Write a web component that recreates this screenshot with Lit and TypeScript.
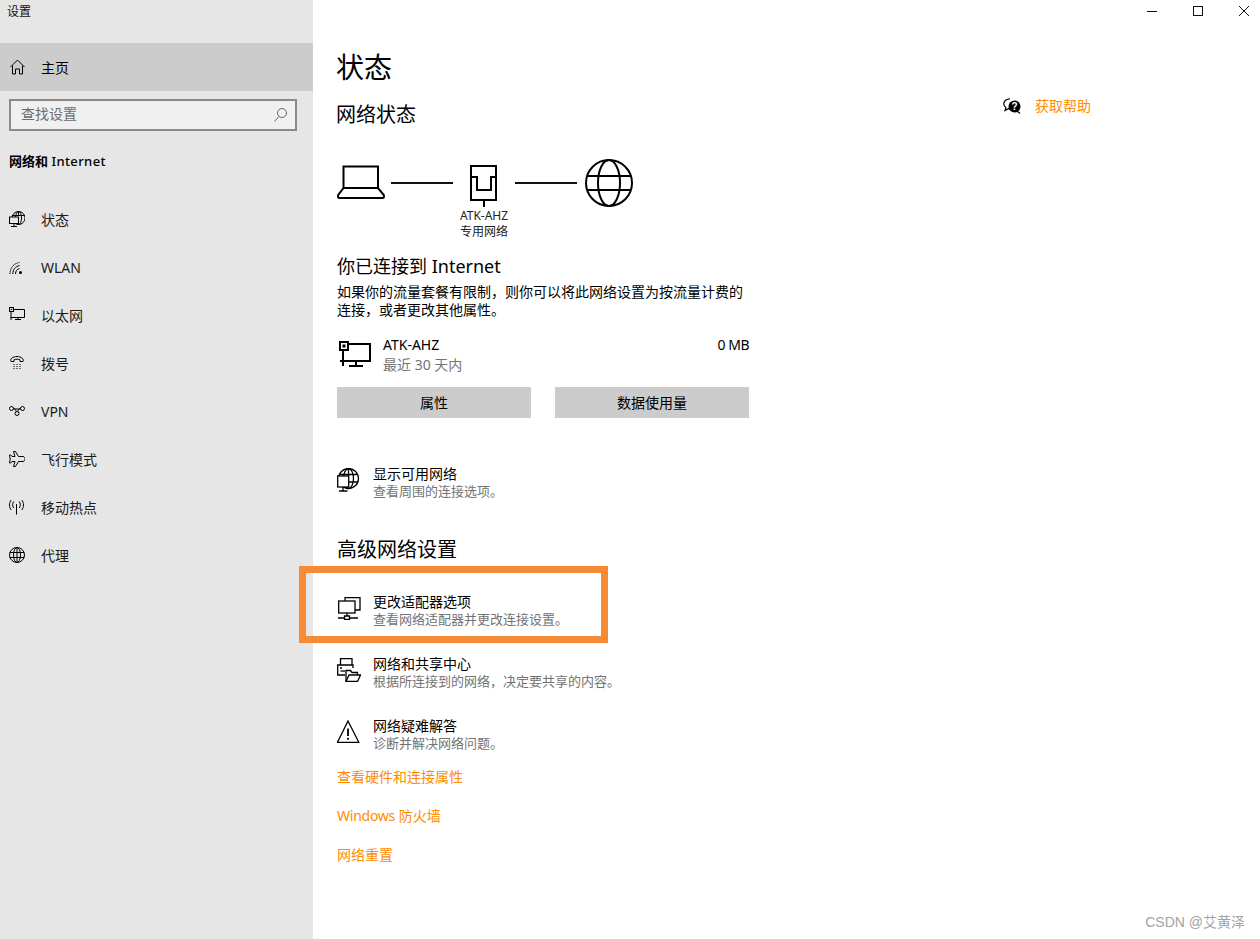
import { LitElement, html, css, svg } from "lit";
import { customElement } from "lit/decorators.js";

const navIcons = {
  status: svg`<circle cx="9.500" cy="7" r="6.500"/><ellipse cx="9.500" cy="7" rx="3" ry="6.500"/><path d="M3 4.500H16M9.500 .5V5"/><rect x=".5" y="6" width="9" height="6.500" fill="#e6e6e6"/><path d="M5 12.500V15M2 15.500H8"/>`,
  wlan: svg`<path d="M1 15C1 9 4.500 4.500 10.500 3.500" stroke-dasharray="1.500 .7"/><path d="M3.800 15C3.800 10.500 6.500 7.500 10.500 6.500"/><path d="M6.500 15C6.500 12 8 10.200 10.500 9.500"/><circle cx="11.500" cy="13.500" r="1.500" fill="#000" stroke="none"/>`,
  ethernet: svg`<path d="M4.500 2.500H15.500V10.500H1.500"/><rect x=".5" y=".5" width="4" height="4"/><path d="M2 4.500V13M6 12.500H12M9 10.500V12.500"/><rect x="1.800" y="1.800" width="1.400" height="1.200" fill="#000" stroke="none"/>`,
  dial: svg`<path d="M2 6.500C.5 4 4 1.500 8 1.500S15.500 4 14 6.500H11V4.800C9 4 7 4 5 4.800V6.500Z"/><path d="M4.500 9.500h1M7.500 9.500h1M10.500 9.500h1M4.500 11.500h1M7.500 11.500h1M10.500 11.500h1M4.500 13.500h1M7.500 13.500h1M10.500 13.500h1"/>`,
  vpn: svg`<circle cx="2.500" cy="5.500" r="2"/><circle cx="13.500" cy="5.500" r="2"/><circle cx="8" cy="10.500" r="2"/><path d="M4.300 5C6 5.500 7 7 7 8.700M11.700 5C10 5.500 9 7 9 8.700M4.500 6C6 6 10 6 11.500 6"/>`,
  plane: svg`<path d="M4.500 .5H6.500L9.500 5.500H14C15.500 5.500 16 7.200 16 8S15.500 10.500 14 10.500H9.500L6.500 15.500H4.500L6 10.500H3L1.800 12H.5L1.200 8L.5 4H1.800L3 5.500H6Z"/>`,
  hotspot: svg`<path d="M7.500 5V15.500"/><path d="M4.700 2.500C3.300 4.500 3.300 7 4.700 9M10.300 2.500C11.700 4.500 11.700 7 10.300 9M2.200 1C-.1 4 -.1 8 2.200 11M12.800 1C15.100 4 15.100 8 12.800 11"/>`,
  globe: svg`<circle cx="8" cy="8" r="7.500"/><ellipse cx="8" cy="8" rx="3.500" ry="7.500"/><path d="M.8 5.500H15.200M.8 10.500H15.200M8 .5V15.500"/>`,
};

const nav = [
  ["status", "状态"],
  ["wlan", "WLAN"],
  ["ethernet", "以太网"],
  ["dial", "拨号"],
  ["vpn", "VPN"],
  ["plane", "飞行模式"],
  ["hotspot", "移动热点"],
  ["globe", "代理"],
] as const;

const bigIcon = (c: unknown) =>
  html`<svg class="row-icon" viewBox="0 0 24 24" width="24" height="24" stroke-width="1.300">${c}</svg>`;

const showIcon = svg`<circle cx="11.500" cy="10.500" r="10"/><ellipse cx="11.500" cy="10.500" rx="5" ry="10"/><path d="M2.500 6.500H20.500M12 14H21M11.500 .5V8"/><rect x=".7" y="8" width="11" height="11" fill="#fff"/><path d="M6 19V23M2 23H10.500"/>`;
const adapterIcon = svg`<path d="M8 5V1.700H23V14H18"/><rect x="1.700" y="5" width="16.300" height="12" fill="#fff"/><path d="M10 17V20M1 22H7.500M12.500 22H21M7.500 20H12.500V23.500H7.500Z"/>`;
const shareIcon = svg`<path d="M3.500 7V.7H15V7"/><path d="M8 17H.7V7H16V10"/><path d="M3.500 13H8"/><path d="M3 10H5"/><path d="M9 23.500V12.500H13.500L15 14.500H20.500V17"/><path d="M9 23.500L12 17H23.500L20.500 23.500Z" fill="#fff"/>`;
const warnIcon = svg`<path d="M11 1L21.800 22.300H.5Z"/><path d="M11 8.500V16" stroke-width="1.800"/><circle cx="11" cy="18.800" r="1.100" fill="#000" stroke="none"/>`;

const settings = [
  [adapterIcon, "更改适配器选项", "查看网络适配器并更改连接设置。"],
  [shareIcon, "网络和共享中心", "根据所连接到的网络，决定要共享的内容。"],
  [warnIcon, "网络疑难解答", "诊断并解决网络问题。"],
] as const;

@customElement("app-root")
export class AppRoot extends LitElement {
  static styles = css`
    :host {
      display: block;
      position: relative;
      width: 1260px;
      height: 939px;
      overflow: hidden;
      background: #fff;
      color: #000;
      font-family: "Noto Sans", "Noto Sans CJK SC", sans-serif;
      font-size: 14px;
    }
    .root { display: flex; height: 100%; }
    svg { display: block; fill: none; stroke: #000; flex: none; }
    p { margin: 0; }

    .sidebar { width: 313px; flex: none; background: #e6e6e6; }
    .app-title { height: 43px; padding-left: 7px; box-sizing: border-box; font-size: 12px; line-height: 24px; color: #111; }
    .home, .nav-item { display: flex; align-items: center; height: 48px; }
    .home { background: #ccc; padding-left: 10px; gap: 16px; }
    .search {
      display: flex; align-items: center; justify-content: space-between;
      margin: 8px 0 0 9px; width: 288px; height: 32px; box-sizing: border-box;
      border: 2px solid #8a8a8a; background: #f0f0f0;
      padding: 0 8px 0 10px; color: #6b6b6b;
    }
    .search span { padding-bottom: 4px; }
    .search svg { stroke: #666; }
    .section { margin: 20px 0 24px 9px; font-size: 13px; font-weight: 700; line-height: 20px; }
    .section span { font-weight: 500; letter-spacing: .4px; }
    .nav-item { padding-left: 9px; gap: 16px; color: #1a1a1a; }

    .main { flex: 1; min-width: 0; display: flex; flex-direction: column; }
    .controls { display: flex; justify-content: flex-end; gap: 36px; height: 47px; padding: 6px 11px 0 0; box-sizing: border-box; }
    .controls svg { stroke: #111; }
    .body { display: flex; padding-left: 24px; }
    .content { width: 412px; flex: none; }
    .aside { margin: 49px 0 0 254px; display: flex; align-items: center; gap: 14px; height: 20px; color: #ff8c00; line-height: 20px; }

    h1 { margin: 0 0 0 -1px; font-size: 28px; line-height: 40px; font-weight: 400; }
    h2 { margin: 14px 0 0 -1px; font-size: 20px; line-height: 28px; font-weight: 400; }
    h2.adv { margin: 35px 0 0; }
    h3 { margin: 14px 0 4px; font-size: 18px; line-height: 26px; font-weight: 400; }

    .diagram { display: flex; margin-top: 30px; height: 80px; }
    .wire { width: 62px; height: 2px; background: #111; margin-top: 23px; flex: none; }
    .laptop { margin-right: 6px; }
    .globe { margin-left: 8px; }
    .device { width: 62px; flex: none; display: flex; flex-direction: column; align-items: center; }
    .device svg { margin-bottom: 1px; }
    .caption { font-size: 12px; line-height: 16px; color: #222; white-space: nowrap; text-align: center; }

    .para { line-height: 18px; }
    .conn { display: flex; margin-top: 16px; height: 40px; }
    .conn svg { margin: 6px 12px 0 2px; }
    .conn-text { flex: 1; line-height: 20px; }
    .meta { line-height: 20px; letter-spacing: -.5px; }
    .muted { color: #737373; }
    .btns { display: flex; gap: 24px; margin-top: 12px; }
    .btn { flex: 1; height: 31px; background: #ccc; display: flex; align-items: center; justify-content: center; padding-bottom: 2px; box-sizing: border-box; }

    .row { display: flex; align-items: flex-start; gap: 12px; height: 36px; }
    .row svg { margin-top: 3px; }
    .row p { line-height: 18px; white-space: nowrap; }
    .row .muted { font-size: 13px; margin-top: -1px; }
    .show { margin-top: 47px; }
    .settings { display: flex; flex-direction: column; gap: 26px; margin-top: 29px; }
    .links { display: flex; flex-direction: column; gap: 19px; margin-top: 14px; color: #ff8c00; line-height: 20px; }
    .latin { letter-spacing: -.25px; }

    .highlight {
      position: absolute; left: 299px; top: 566px; width: 309px; height: 77px;
      box-sizing: border-box; border: 7px solid #f68b36; pointer-events: none;
    }
    .watermark { position: absolute; right: 15px; top: 913px; font-family: "Liberation Sans", "Noto Sans CJK SC", sans-serif; font-size: 14px; line-height: 18px; color: #a3a3a3; }
  `;

  render() {
    return html`
      <div class="root">
        <aside class="sidebar">
          <div class="app-title">设置</div>
          <div class="home">
            <svg width="15" height="16" viewBox="0 0 15 16"><path d="M.5 8L7.500 1L14.500 8M2.500 6.500V15H5.500V10H9.500V15H12.500V6.500"/></svg>
            <span>主页</span>
          </div>
          <div class="search">
            <span>查找设置</span>
            <svg width="13" height="14" viewBox="0 0 13 14"><circle cx="8" cy="5" r="4.500"/><path d="M4.800 8.500L.5 13.500"/></svg>
          </div>
          <div class="section">网络和 <span>Internet</span></div>
          ${nav.map(
            ([k, t]) => html`<div class="nav-item">
              <svg width="16" height="16" viewBox="0 0 16 16">${navIcons[k]}</svg>
              <span>${t}</span>
            </div>`
          )}
        </aside>
        <main class="main">
          <div class="controls">
            <svg width="10" height="10" viewBox="0 0 10 10"><path d="M0 5.500H10"/></svg>
            <svg width="10" height="10" viewBox="0 0 10 10"><rect x=".5" y=".5" width="9" height="9"/></svg>
            <svg width="10" height="10" viewBox="0 0 10 10"><path d="M0 0L10 10M10 0L0 10"/></svg>
          </div>
          <div class="body">
            <div class="content">
              <h1>状态</h1>
              <h2>网络状态</h2>
              <div class="diagram">
                <svg class="laptop" width="48" height="48" viewBox="0 0 48 48" stroke-width="2">
                  <path d="M6.500 29V7.500H41V29M6.500 29L1.200 36Q.5 39 2.500 39H45.500Q47.500 39 46.800 36L41 29Z"/>
                </svg>
                <div class="wire"></div>
                <div class="device">
                  <svg width="48" height="48" viewBox="0 0 48 48" stroke-width="2">
                    <path d="M11 7H36V41H11ZM11 18H17V31H31V18H36M24 41V48"/>
                  </svg>
                  <div class="caption">ATK-AHZ</div>
                  <div class="caption">专用网络</div>
                </div>
                <div class="wire"></div>
                <svg class="globe" width="48" height="48" viewBox="0 0 48 48" stroke-width="2">
                  <circle cx="24" cy="24" r="23"/><ellipse cx="24" cy="24" rx="11" ry="23"/>
                  <path d="M3 17H45M3 31H45"/>
                </svg>
              </div>
              <h3>你已连接到 Internet</h3>
              <p class="para">如果你的流量套餐有限制，则你可以将此网络设置为按流量计费的连接，或者更改其他属性。</p>
              <div class="conn">
                <svg width="32" height="28" viewBox="0 0 32 28" stroke-width="2">
                  <path d="M9 3H31V20H1"/><rect x="1" y="1" width="8" height="8"/>
                  <rect x="3.500" y="3.500" width="3" height="3" fill="#000" stroke="none"/>
                  <path d="M4 9V25M10 25H24M17 20V25"/>
                </svg>
                <div class="conn-text">
                  <div>ATK-AHZ</div>
                  <div class="muted">最近 30 天内</div>
                </div>
                <div class="meta">0 MB</div>
              </div>
              <div class="btns">
                <div class="btn">属性</div>
                <div class="btn">数据使用量</div>
              </div>
              <div class="row show">
                ${bigIcon(showIcon)}
                <div><p>显示可用网络</p><p class="muted">查看周围的连接选项。</p></div>
              </div>
              <h2 class="adv">高级网络设置</h2>
              <div class="settings">
                ${settings.map(
                  ([icon, t, s]) => html`<div class="row">
                    ${bigIcon(icon)}
                    <div><p>${t}</p><p class="muted">${s}</p></div>
                  </div>`
                )}
              </div>
              <div class="links">
                <div>查看硬件和连接属性</div>
                <div><span class="latin">Windows</span> 防火墙</div>
                <div>网络重置</div>
              </div>
            </div>
            <div class="aside">
              <svg width="18" height="16" viewBox="0 0 18 16">
                <path d="M7 .8C3.500 .8 .8 3 .8 5.800C.8 7.500 1.800 9 3 9.800L2 12.500L5.500 10.700C6 10.800 6.500 10.800 7 10.800" stroke-width="1.200"/>
                <circle cx="11.500" cy="8.500" r="6" fill="#000" stroke="none"/>
                <path d="M14 13L17 15.500" stroke-width="1.200"/>
                <text x="11.500" y="12" font-size="10" font-weight="700" text-anchor="middle" fill="#fff" stroke="none" font-family="Liberation Sans, sans-serif">?</text>
              </svg>
              <span>获取帮助</span>
            </div>
          </div>
        </main>
      </div>
      <div class="highlight"></div>
      <div class="watermark">CSDN @艾黄泽</div>
    `;
  }
}
